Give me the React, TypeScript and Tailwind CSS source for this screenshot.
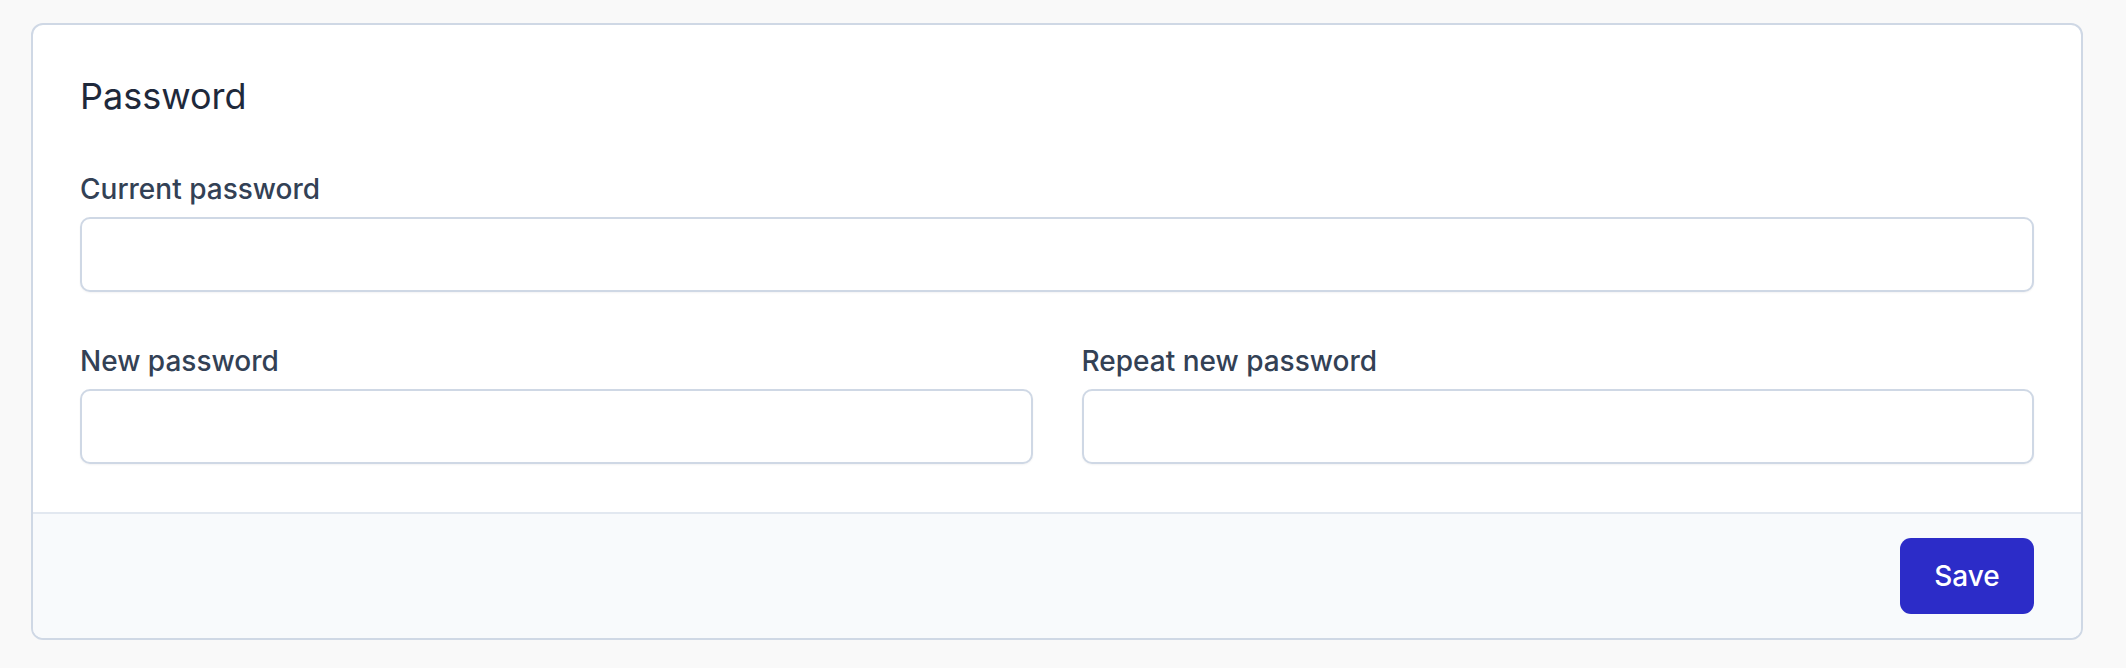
import React from "react";

const Field = ({ label, id }: { label: string; id: string }) => (
  <div className="flex flex-col gap-[7px]">
    <label htmlFor={id} className="text-[28px] leading-[42px] font-medium text-[#334155]">
      {label}
    </label>
    <input
      id={id}
      type="password"
      className="h-[75px] w-full rounded-[10px] border-2 border-[#cfd8e5] bg-white px-4 shadow-[0_1px_2px_rgba(15,23,42,0.05)] outline-none"
    />
  </div>
);

const App = () => {
  return (
    <div
      className="min-h-[668px] bg-[#f9f9f9] pt-[23px] pl-[31px] pr-[43px]"
      style={{ fontFamily: "Inter, 'Noto Sans', sans-serif" }}
    >
      <form className="overflow-hidden rounded-[12px] border-2 border-[#cfd8e5] bg-white">
        <div className="flex flex-col gap-[48px] px-[47px] pt-[47px] pb-[48px]">
          <h2 className="text-[36px] leading-[48px] text-[#1e293b]">Password</h2>
          <div className="flex flex-col gap-[48px]">
            <Field label="Current password" id="current_password" />
            <div className="grid grid-cols-2 gap-[49px]">
              <Field label="New password" id="new_password" />
              <Field label="Repeat new password" id="repeat_password" />
            </div>
          </div>
        </div>
        <div className="flex justify-end border-t-2 border-[#e2e8f0] bg-[#f8fafc] px-[47px] py-[24px]">
          <button
            type="submit"
            className="h-[76px] w-[134px] rounded-[11px] bg-[#2c2cc8] text-[28px] font-medium text-white"
          >
            Save
          </button>
        </div>
      </form>
    </div>
  );
};

export default App;
